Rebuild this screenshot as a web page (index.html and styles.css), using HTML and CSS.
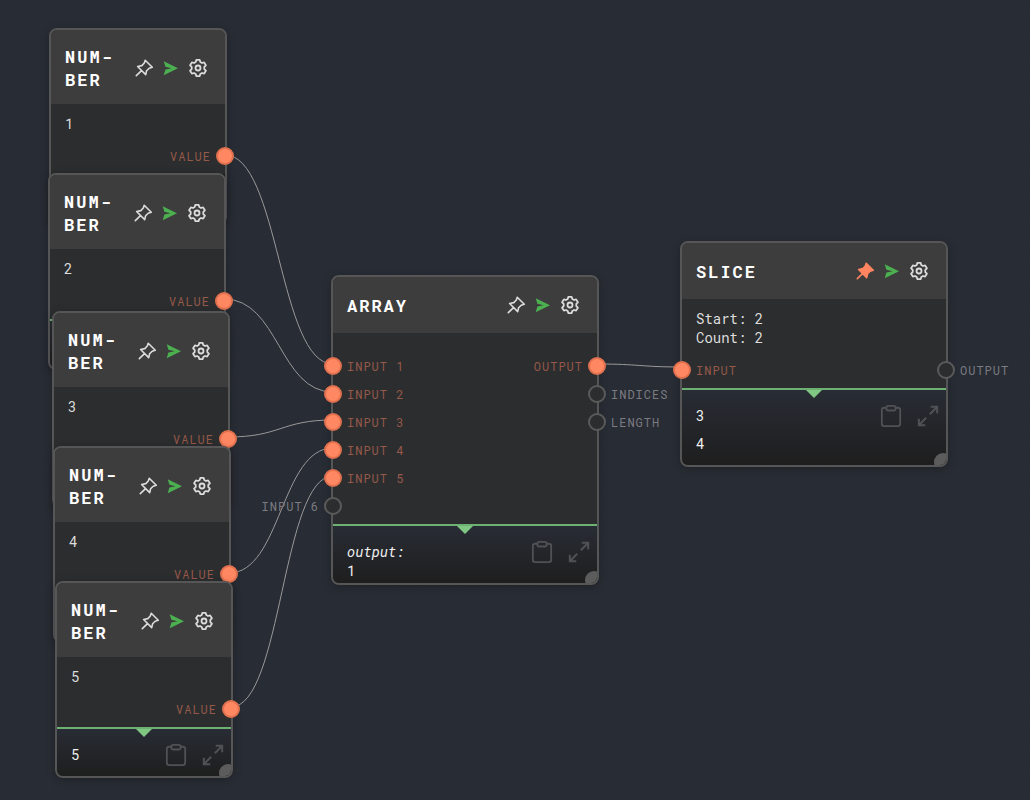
FILE: index.html
```
<!DOCTYPE html>
<html lang="en">
<head>
<meta charset="utf-8">
<title>Node editor</title>
<link rel="stylesheet" href="styles.css">
</head>
<body>
<svg class="symbols" aria-hidden="true">
  <symbol id="pin" viewBox="0 0 20 20"><path d="M11.200 2.200L18.300 9.300L15.200 10.200L12.600 12.800L11.700 16.600L3.600 8.500L7.800 7.600L10.300 5ZM7.500 12.600L2.300 17.600" stroke-linejoin="round" stroke-linecap="round" stroke-width="1.600"/></symbol>
  <symbol id="send" viewBox="0 0 20 20"><path d="M2.700 3.200L17 10.200L2.700 17.200L4.400 11.600L10.500 10.200L4.400 8.800Z"/></symbol>
  <symbol id="gear" viewBox="0 0 20 20"><path d="M8.300 1.900H11.700L12.300 4L14 5L16.100 4.400L17.900 7.300L16.300 8.900V11.100L17.900 12.700L16.100 15.600L14 15L12.300 16L11.700 18.100H8.300L7.700 16L6 15L3.900 15.600L2.100 12.700L3.700 11.100V8.900L2.100 7.300L3.900 4.400L6 5L7.700 4Z" stroke-linejoin="round" stroke-width="1.800"/><circle cx="10" cy="10" r="2.500" stroke-width="1.800"/></symbol>
  <symbol id="clip" viewBox="0 0 24 24"><path d="M7 3H4.500Q2 3 2 5.500V20.500Q2 23 4.500 23H19.500Q22 23 22 20.500V5.500Q22 3 19.500 3H17" stroke-width="2"/><rect x="7" y="1" width="10" height="5" rx="2" stroke-width="2"/></symbol>
  <symbol id="expand" viewBox="0 0 24 24"><path d="M14 10L21.500 2.500M15 2H22V9M10 14L2.500 21.500M2 15V22H9" stroke-width="2.200"/></symbol>
</svg>
<main class="canvas">
  <svg class="wires" aria-hidden="true">
    <path d="M225 155C279 155 279 364 333 364"/>
    <path d="M224 299C279 299 279 392 333 392"/>
    <path d="M228 437C281 437 281 420 333 420"/>
    <path d="M229 573C281 573 281 448 333 448"/>
    <path d="M231 707C282 707 282 476 333 476"/>
    <path d="M597 364C640 364 640 367 682 367"/>
  </svg>

  <article class="node number n1">
    <header class="head"><h2 class="title">NUM&shy;BER</h2>
      <button class="tool" aria-label="Pin"><svg><use href="#pin"/></svg></button><button class="tool send" aria-label="Run"><svg><use href="#send"/></svg></button><button class="tool" aria-label="Settings"><svg><use href="#gear"/></svg></button></header>
    <div class="body"><p class="info">1</p><div class="ports"><ul class="side"></ul><ul class="side out"><li class="port on"><span class="label">VALUE</span><i class="dot"></i></li></ul></div></div>
    <section class="result covered"></section>
  </article>

  <article class="node number n2">
    <header class="head"><h2 class="title">NUM&shy;BER</h2>
      <button class="tool" aria-label="Pin"><svg><use href="#pin"/></svg></button><button class="tool send" aria-label="Run"><svg><use href="#send"/></svg></button><button class="tool" aria-label="Settings"><svg><use href="#gear"/></svg></button></header>
    <div class="body"><p class="info">2</p><div class="ports"><ul class="side"></ul><ul class="side out"><li class="port on"><span class="label">VALUE</span><i class="dot"></i></li></ul></div></div>
    <section class="result"></section>
  </article>

  <article class="node number n3">
    <header class="head"><h2 class="title">NUM&shy;BER</h2>
      <button class="tool" aria-label="Pin"><svg><use href="#pin"/></svg></button><button class="tool send" aria-label="Run"><svg><use href="#send"/></svg></button><button class="tool" aria-label="Settings"><svg><use href="#gear"/></svg></button></header>
    <div class="body"><p class="info">3</p><div class="ports"><ul class="side"></ul><ul class="side out"><li class="port on"><span class="label">VALUE</span><i class="dot"></i></li></ul></div></div>
    <section class="result"></section>
  </article>

  <article class="node number n4">
    <header class="head"><h2 class="title">NUM&shy;BER</h2>
      <button class="tool" aria-label="Pin"><svg><use href="#pin"/></svg></button><button class="tool send" aria-label="Run"><svg><use href="#send"/></svg></button><button class="tool" aria-label="Settings"><svg><use href="#gear"/></svg></button></header>
    <div class="body"><p class="info">4</p><div class="ports"><ul class="side"></ul><ul class="side out"><li class="port on"><span class="label">VALUE</span><i class="dot"></i></li></ul></div></div>
    <section class="result"></section>
  </article>

  <article class="node number n5">
    <header class="head"><h2 class="title">NUM&shy;BER</h2>
      <button class="tool" aria-label="Pin"><svg><use href="#pin"/></svg></button><button class="tool send" aria-label="Run"><svg><use href="#send"/></svg></button><button class="tool" aria-label="Settings"><svg><use href="#gear"/></svg></button></header>
    <div class="body"><p class="info">5</p><div class="ports"><ul class="side"></ul><ul class="side out"><li class="port on"><span class="label">VALUE</span><i class="dot"></i></li></ul></div></div>
    <section class="result"><div class="values"><p class="item">5</p></div>
      <button class="action" aria-label="Copy"><svg><use href="#clip"/></svg></button><button class="action" aria-label="Expand"><svg><use href="#expand"/></svg></button><i class="grip"></i></section>
  </article>

  <article class="node array">
    <header class="head"><h2 class="title">ARRAY</h2>
      <button class="tool" aria-label="Pin"><svg><use href="#pin"/></svg></button><button class="tool send" aria-label="Run"><svg><use href="#send"/></svg></button><button class="tool" aria-label="Settings"><svg><use href="#gear"/></svg></button></header>
    <div class="body"><div class="ports">
      <ul class="side in">
        <li class="port on"><i class="dot"></i><span class="label">INPUT 1</span></li>
        <li class="port on"><i class="dot"></i><span class="label">INPUT 2</span></li>
        <li class="port on"><i class="dot"></i><span class="label">INPUT 3</span></li>
        <li class="port on"><i class="dot"></i><span class="label">INPUT 4</span></li>
        <li class="port on"><i class="dot"></i><span class="label">INPUT 5</span></li>
        <li class="port"><i class="dot"></i><span class="label">INPUT 6</span></li>
      </ul>
      <ul class="side out">
        <li class="port on"><span class="label">OUTPUT</span><i class="dot"></i></li>
        <li class="port"><span class="label">INDICES</span><i class="dot"></i></li>
        <li class="port"><span class="label">LENGTH</span><i class="dot"></i></li>
      </ul></div></div>
    <section class="result"><dl class="values pairs"><dt>output:</dt><dd>1</dd></dl>
      <button class="action" aria-label="Copy"><svg><use href="#clip"/></svg></button><button class="action" aria-label="Expand"><svg><use href="#expand"/></svg></button><i class="grip"></i></section>
  </article>

  <article class="node slice">
    <header class="head"><h2 class="title">SLICE</h2>
      <button class="tool pinned" aria-label="Unpin"><svg><use href="#pin"/></svg></button><button class="tool send" aria-label="Run"><svg><use href="#send"/></svg></button><button class="tool" aria-label="Settings"><svg><use href="#gear"/></svg></button></header>
    <div class="body"><p class="info">Start: 2<br>Count: 2</p><div class="ports">
      <ul class="side in"><li class="port on"><i class="dot"></i><span class="label">INPUT</span></li></ul>
      <ul class="side out"><li class="port"><span class="label">OUTPUT</span><i class="dot"></i></li></ul></div></div>
    <section class="result"><div class="values"><p class="item">3</p><p class="item">4</p></div>
      <button class="action" aria-label="Copy"><svg><use href="#clip"/></svg></button><button class="action" aria-label="Expand"><svg><use href="#expand"/></svg></button><i class="grip"></i></section>
  </article>
</main>
</body>
</html>
```
FILE: styles.css
```
* { box-sizing: border-box; }
body, h2, p, ul, dl, dd { margin: 0; padding: 0; }
ul { list-style: none; }
button { background: none; border: 0; padding: 0; color: inherit; }
body {
  background: #282c34;
  color: #dcdcdc;
  font: 14px/19px "Roboto Mono", "DejaVu Sans Mono", monospace;
}
.symbols { position: absolute; width: 0; height: 0; }
.canvas {
  position: relative;
  min-height: 100vh;
  overflow: hidden;
  background-image:
    linear-gradient(#2b2d34 1px, transparent 1px),
    linear-gradient(90deg, #2b2d34 1px, transparent 1px);
  background-size: 23px 23px;
  background-position: 3px 10px;
}
.wires {
  position: absolute;
  inset: 0;
  width: 100%;
  height: 100%;
  fill: none;
  stroke: #999;
  stroke-width: 1;
}
.node {
  position: absolute;
  width: 268px;
  border: 2px solid #565656;
  border-radius: 8px;
  background: #2c2d2e;
  box-shadow: 0 2px 8px rgba(0, 0, 0, .25);
}
.number { width: 178px; }
.n1 { left: 49px; top: 28px; }
.n2 { left: 48px; top: 173px; }
.n3 { left: 52px; top: 311px; }
.n4 { left: 53px; top: 446px; }
.n5 { left: 55px; top: 581px; }
.array { left: 331px; top: 275px; }
.slice { left: 680px; top: 241px; }

.head {
  display: flex;
  align-items: center;
  gap: 7px;
  min-height: 56px;
  padding: 14px 17px 14px 14px;
  background: #3d3d3d;
  border-radius: 6px 6px 0 0;
}
.number .head { padding-top: 15px; padding-bottom: 13px; }
.title {
  flex: 1;
  min-width: 0;
  color: #fff;
  font-size: 17px;
  line-height: 23px;
  letter-spacing: 2px;
  hyphens: manual;
}
.tool { flex: none; width: 20px; height: 20px; color: #dcdcdc; }
.tool svg { display: block; width: 20px; height: 20px; fill: none; stroke: currentColor; }
.send svg { fill: #4caf50; stroke: none; }
.pinned svg { fill: #ff8560; stroke: #ff8560; }

.body { padding: 10px 0 4px; }
.info { padding: 0 14px; }
.ports { display: flex; justify-content: space-between; margin-top: 9px; }
.port {
  display: flex;
  align-items: center;
  gap: 5px;
  height: 28px;
  color: #7b7b82;
  font-size: 12px;
  letter-spacing: 1px;
}
.in { margin-left: -9px; }
.out { margin-right: -9px; }
.out .port { justify-content: flex-end; }
.port.on { color: #96594a; }
.dot {
  flex: none;
  width: 18px;
  height: 18px;
  border: 2px solid #5a5a5a;
  border-radius: 50%;
  background: #2c2d2e;
}
.on .dot { background: #ff8762; border-color: #e0714f; }
/* Unconnected ports carry their label outside the node. */
.port:not(.on) { width: 18px; overflow: visible; white-space: nowrap; }
.in .port:not(.on) { flex-direction: row-reverse; justify-content: flex-start; }
.out .port:not(.on) { flex-direction: row-reverse; justify-content: flex-end; margin-left: auto; }

.result {
  position: relative;
  display: flex;
  gap: 15px;
  min-height: 49px;
  padding: 12px 7px 7px 14px;
  border-top: 2px solid #6db272;
  border-radius: 0 0 6px 6px;
  background: linear-gradient(#282c34, #1e1e1e);
  color: #f0f0f0;
  overflow: hidden;
}
.result.covered { border-top-color: transparent; }
.result::before {
  content: "";
  position: absolute;
  top: 0;
  left: 50%;
  margin-left: -8px;
  border: 8px solid transparent;
  border-top-color: #81c784;
  border-bottom: 0;
}
.values { flex: 1; }
.item { line-height: 28px; }
.pairs { padding-top: 4px; height: 38px; }
.pairs dt { font-style: italic; }
.action { width: 22px; height: 24px; margin-top: 2px; color: #505154; }
.action svg { display: block; width: 22px; height: 24px; fill: none; stroke: currentColor; }
.grip {
  position: absolute;
  right: -6px;
  bottom: -6px;
  width: 18px;
  height: 18px;
  border-radius: 50%;
  background: #5c5c5c;
}
```
